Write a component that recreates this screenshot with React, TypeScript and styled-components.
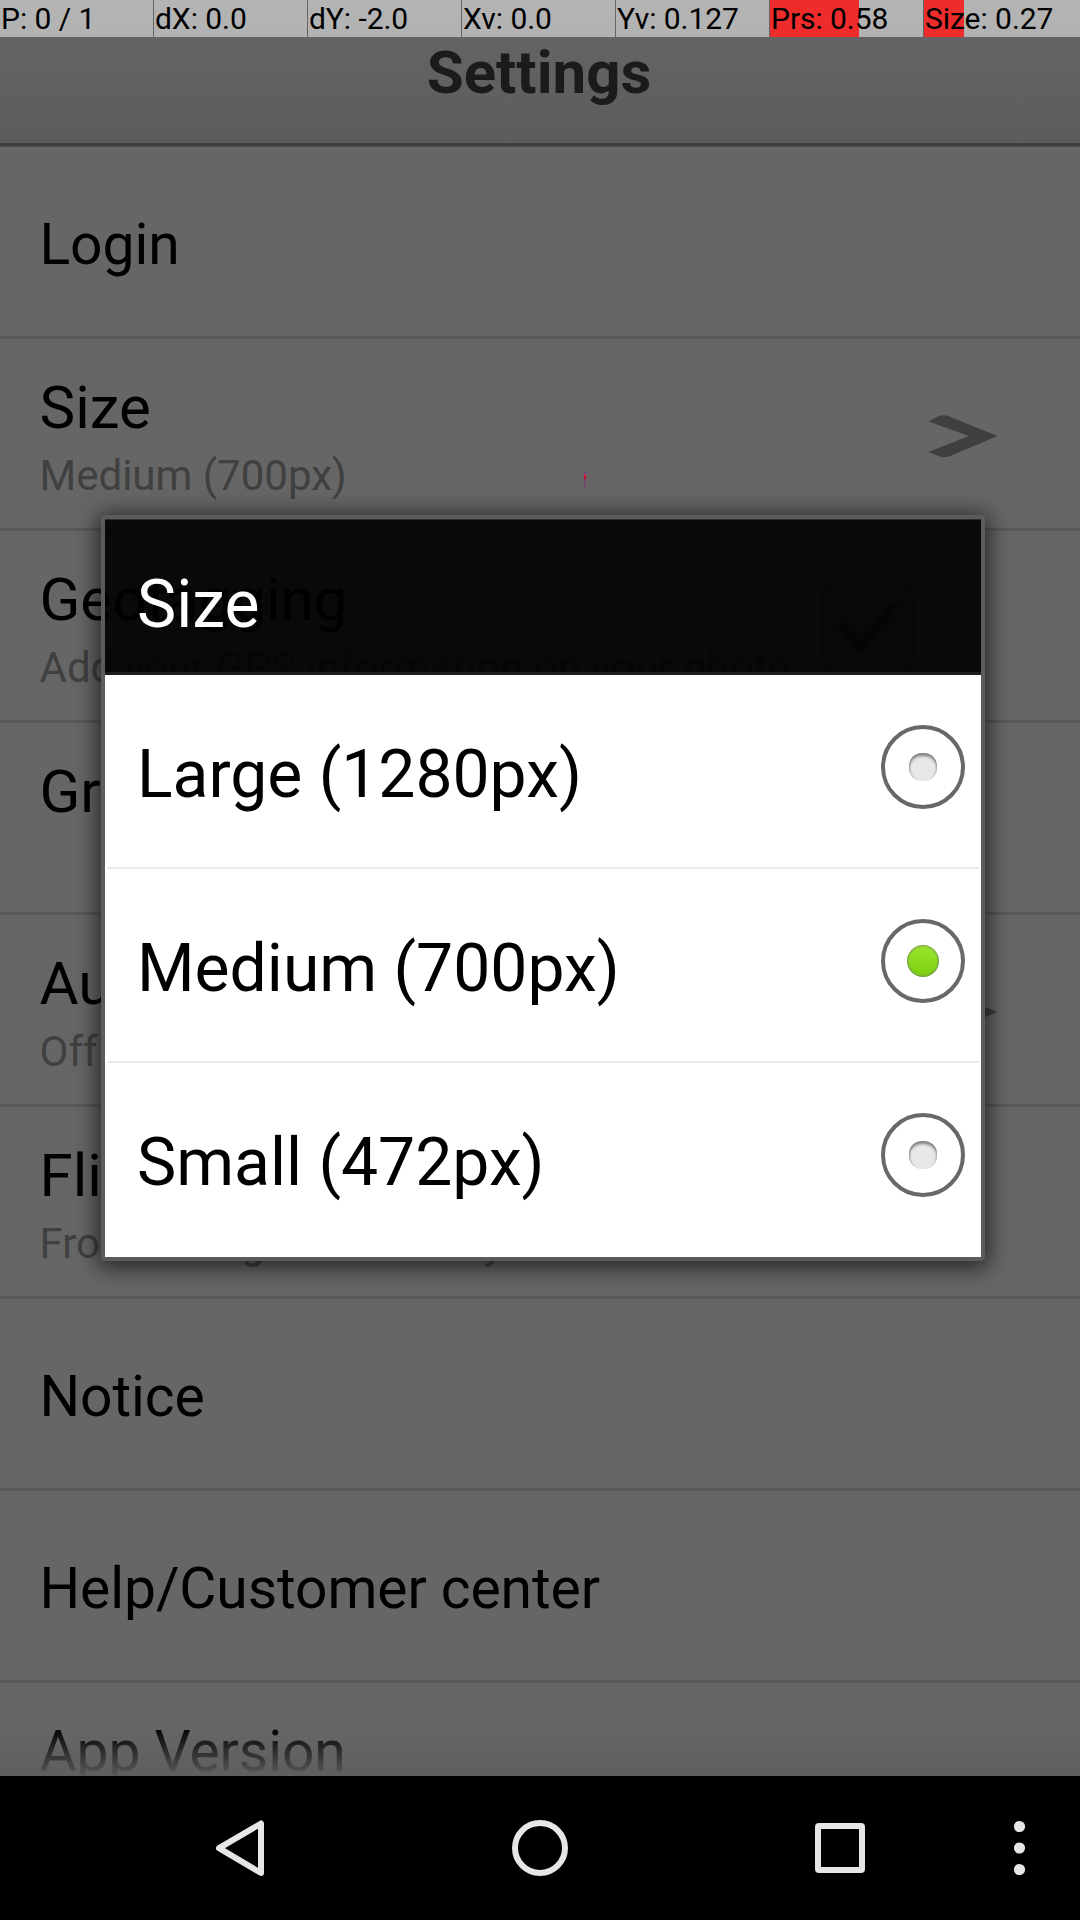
import React from "react";
import styled, { createGlobalStyle } from "styled-components";

const GlobalStyle = createGlobalStyle`
  * { box-sizing: border-box; }
  html, body { margin: 0; padding: 0; background: #000; }
  body { font-family: Roboto, "Liberation Sans", sans-serif; }
`;

const Screen = styled.div`
  position: relative;
  display: flex;
  flex-direction: column;
  width: 1080px;
  height: 1920px;
  overflow: hidden;
  background: #666;
`;

const PointerBar = styled.div`
  display: grid;
  grid-template-columns: repeat(6, 153px) 1fr;
  column-gap: 1px;
  flex: none;
  height: 37px;
  background: #666;
`;

const PointerCell = styled.div<{ $fill?: number }>`
  padding-left: 1px;
  font-size: 30px;
  line-height: 37px;
  letter-spacing: -0.05px;
  white-space: pre;
  color: #000;
  background: ${({ $fill = 0 }) =>
    `linear-gradient(to right, #ee2c2c ${$fill}px, transparent ${$fill}px), linear-gradient(#b4b4b4, #b2b2b2)`};
`;

const Header = styled.header`
  display: flex;
  flex: none;
  justify-content: center;
  height: 110px;
  padding: 1px 2px 0 0;
  background: linear-gradient(#3f3f3f, #3a3a3a 50%, #555) 0 106px / 100% 4px no-repeat,
    linear-gradient(#646464, #5c5c5c);
`;

const HeaderTitle = styled.h1`
  margin: 0;
  font-size: 60px;
  line-height: 70px;
  font-weight: 700;
  color: #1b1b1b;
`;

const List = styled.main`
  position: relative;
  flex: none;
  height: 1629px;
  overflow: hidden;
`;

const BottomFade = styled.div`
  position: absolute;
  left: 0;
  right: 0;
  bottom: 0;
  height: 50px;
  background: linear-gradient(rgba(94, 94, 94, 0), rgba(94, 94, 94, 0.95));
`;

const Row = styled.section<{ $top: number }>`
  display: flex;
  justify-content: space-between;
  height: 192px;
  padding: ${({ $top }) => $top}px 82px 0 39.5px;
  border-bottom: 3px solid #595959;
`;

const RowTitle = styled.div<{ $size?: number }>`
  font-size: ${({ $size = 60 }) => $size}px;
  line-height: 70px;
  letter-spacing: ${({ $size }) => ($size ? -0.09 : 0)}px;
  color: #000;
  white-space: nowrap;
`;

const RowNote = styled.div`
  margin-top: 8px;
  font-size: 42px;
  line-height: 50px;
  color: #404040;
  white-space: nowrap;
`;

const ArrowIcon = styled.svg`
  width: 70px;
  height: 44px;
  margin-top: 41px;
`;

const CheckIcon = styled.svg`
  width: 94px;
  height: 94px;
  margin: 15px 83px 0 0;
`;

const Dialog = styled.div`
  position: absolute;
  left: 101px;
  top: 515px;
  width: 884px;
  height: 746px;
  display: flex;
  flex-direction: column;
  border: 4px solid #5b5b5b;
  border-radius: 5px;
  box-shadow: 0 3px 22px 4px rgba(0, 0, 0, 0.62);
`;

const DialogHeader = styled.div`
  flex: none;
  height: 156px;
  padding: 46px 0 0 32px;
  border-top: 1px solid #2c2c2c;
  border-bottom: 3px solid rgba(26, 26, 26, 0.94);
  background: rgba(0, 0, 0, 0.91);
  background-clip: padding-box;
  font-size: 66px;
  line-height: 78px;
  color: #fff;
`;

const Options = styled.div`
  flex: 1;
  padding: 0 2px;
  background: #fff;
`;

const Option = styled.div`
  display: flex;
  justify-content: space-between;
  height: 194px;
  padding: 61px 13px 0 30px;
  border-bottom: 2px solid #eaeaea;
  font-size: 66px;
  line-height: 78px;
  color: #000;
  &:last-child { border-bottom: 0; }
`;

const RadioRing = styled.span`
  display: flex;
  align-items: center;
  justify-content: center;
  width: 84px;
  height: 84px;
  margin: -11px 1px 0 0;
  border: 4px solid #686868;
  border-radius: 50%;
`;

const RadioDot = styled.span<{ $on: boolean }>`
  width: ${({ $on }) => ($on ? 32 : 28)}px;
  height: ${({ $on }) => ($on ? 32 : 28)}px;
  border-radius: ${({ $on }) => ($on ? "50%" : "13px")};
  background: ${({ $on }) => ($on ? "linear-gradient(#9ce62e, #7cd010)" : "#e8e8e8")};
  box-shadow: ${({ $on }) =>
    $on
      ? "inset 0 0 2px 1px rgba(110, 120, 110, 0.7)"
      : "inset 0 4px 3px -1px rgba(60, 60, 60, 0.6), inset 3px 0 2px -2px rgba(70, 70, 70, 0.4), inset -3px 0 2px -2px rgba(70, 70, 70, 0.3)"};
`;

const TouchMark = styled.div`
  position: absolute;
  left: 584px;
  top: 471px;
  width: 2px;
  height: 16px;
  background: linear-gradient(#73486f 3px, #c02850 3px 5px, #e0002c 5px 8px, #73486f 8px);
`;

const NavBar = styled.nav`
  flex: none;
  height: 144px;
  background: #000;
  svg { display: block; }
`;

const Arrow = () => (
  <ArrowIcon viewBox="928 414 70 44">
    <path d="M928.5 421.5 939 416q4-1.500 9 0L997.500 436 949 456.500q-5 1.500-9 0L928.500 452 969 436Z" fill="#3f3f3f" />
  </ArrowIcon>
);

const Checkbox = () => (
  <CheckIcon viewBox="0 0 94 94">
    <rect x="2" y="2" width="90" height="90" rx="12" fill="#5e5e5e" stroke="#555" strokeWidth="3" />
    <path d="M21 46 39 69 73 25" fill="none" stroke="#3a3a3a" strokeWidth="8" strokeLinecap="round" strokeLinejoin="round" />
  </CheckIcon>
);

const metrics = [
  { label: "P: 0 / 1" },
  { label: "dX: 0.0" },
  { label: "dY: -2.0" },
  { label: "Xv: 0.0" },
  { label: "Yv: 0.127" },
  { label: "Prs: 0.58", fill: 89 },
  { label: "Size: 0.27", fill: 40 },
];

const settings: { title: string; note?: string; size?: number; top: number; extra?: React.ReactNode }[] = [
  { title: "Login", size: 57, top: 63 },
  { title: "Size", note: "Medium (700px)", top: 34, extra: <Arrow /> },
  { title: "Geotagging", note: "Add your GPS information on your photo", top: 34, extra: <Checkbox /> },
  { title: "Grid", top: 34 },
  { title: "Auto", note: "Off", top: 34, extra: <Arrow /> },
  { title: "Flip", note: "Front-facing camera only", top: 34 },
  { title: "Notice", size: 57, top: 63 },
  { title: "Help/Customer center", size: 57, top: 63 },
  { title: "App Version", size: 57, top: 34 },
];

const options = ["Large (1280px)", "Medium (700px)", "Small (472px)"];

export default function App() {
  const [selected, setSelected] = React.useState(1);
  return (
    <>
      <GlobalStyle />
      <Screen>
        <PointerBar>
          {metrics.map((m) => (
            <PointerCell key={m.label} $fill={m.fill}>{m.label}</PointerCell>
          ))}
        </PointerBar>
        <Header>
          <HeaderTitle>Settings</HeaderTitle>
        </Header>
        <List>
          {settings.map((s) => (
            <Row key={s.title} $top={s.top}>
              <div>
                <RowTitle $size={s.size}>{s.title}</RowTitle>
                {s.note && <RowNote>{s.note}</RowNote>}
              </div>
              {s.extra}
            </Row>
          ))}
          <BottomFade />
        </List>
        <NavBar>
          <svg width="1080" height="144" fill="none" stroke="#e6e6e6" strokeWidth="6" strokeLinejoin="round">
            <path d="M261 47.500V97L219 72.200Z" />
            <circle cx="540" cy="72" r="25" />
            <rect x="818" y="50" width="44" height="44" rx="1" />
            <g fill="#e6e6e6" stroke="none">
              <circle cx="1019.500" cy="50.500" r="5.600" />
              <circle cx="1019.500" cy="72" r="5.600" />
              <circle cx="1019.500" cy="93.500" r="5.600" />
            </g>
          </svg>
        </NavBar>
        <TouchMark />
        <Dialog role="dialog">
          <DialogHeader>Size</DialogHeader>
          <Options>
            {options.map((label, i) => (
              <Option key={label} onClick={() => setSelected(i)}>
                {label}
                <RadioRing>
                  <RadioDot $on={i === selected} />
                </RadioRing>
              </Option>
            ))}
          </Options>
        </Dialog>
      </Screen>
    </>
  );
}
